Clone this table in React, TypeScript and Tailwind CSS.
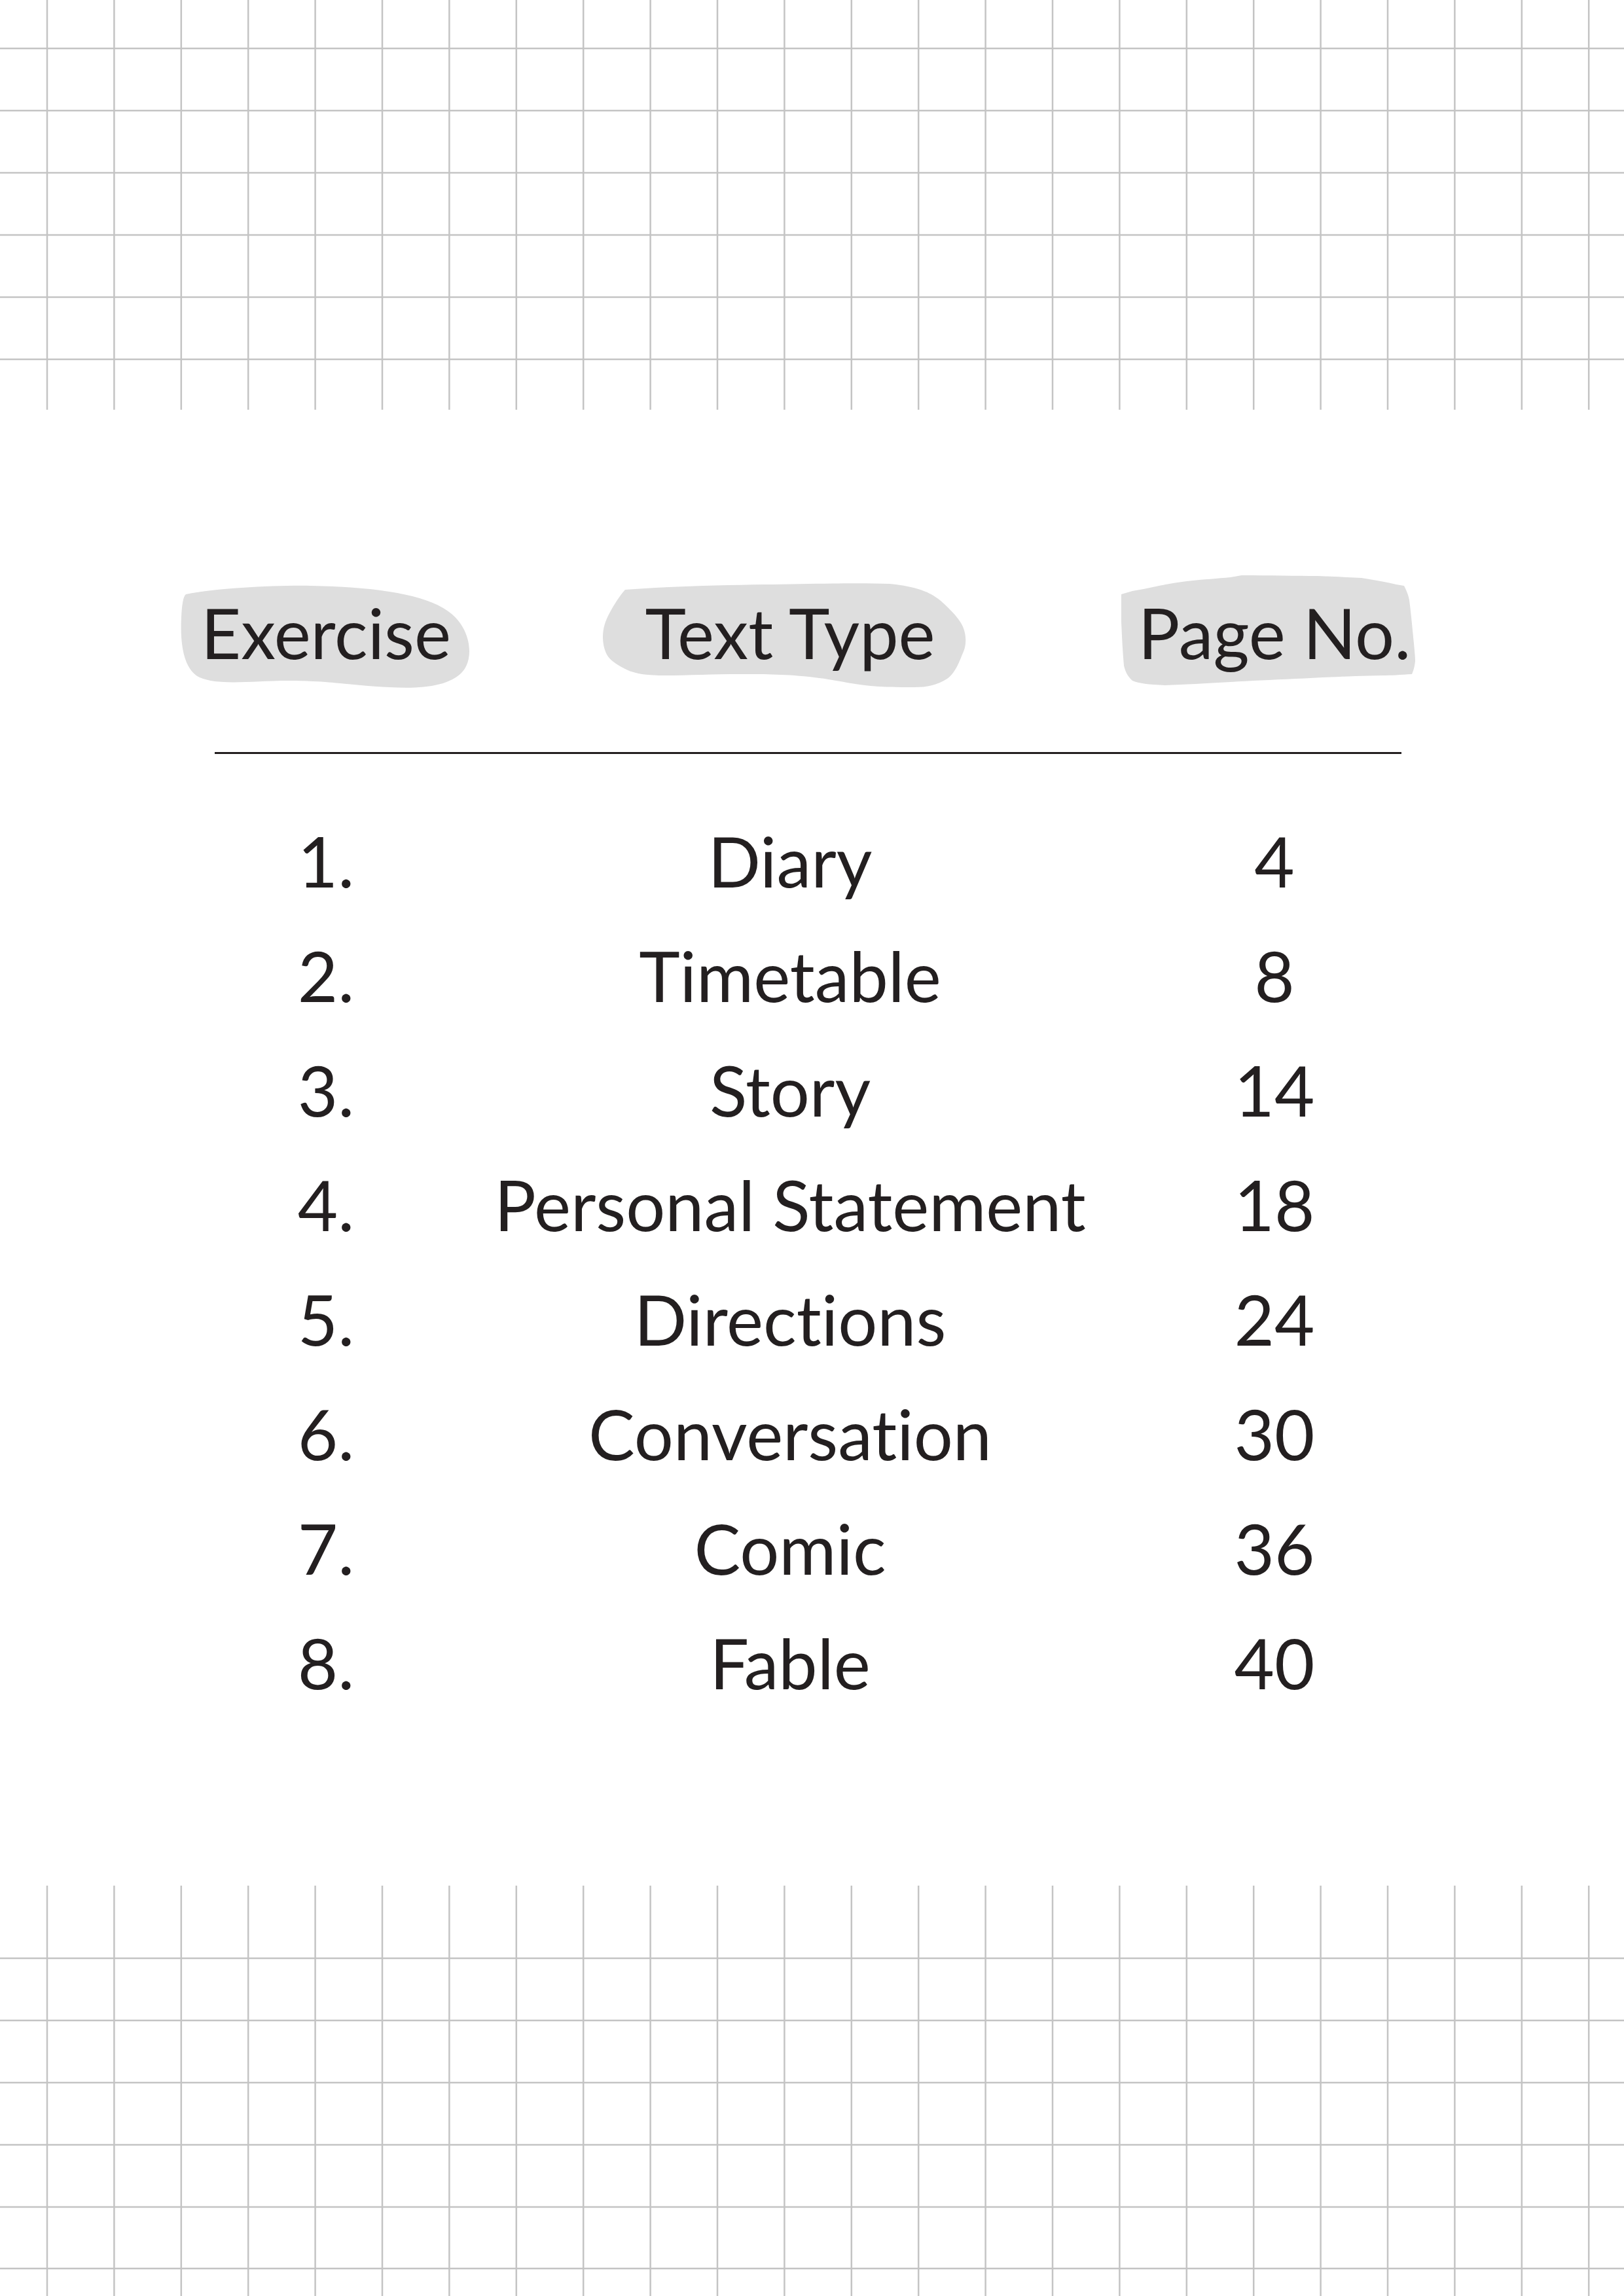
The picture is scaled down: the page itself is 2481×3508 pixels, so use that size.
import { FC } from "react"

type GridProps = {
  height: number
  rows: number[]
}

const GRID_X = Array.from({ length: 24 }, (_, i) => 72 + i * 102.4)

// squared paper strip, drawn as svg lines
const GridPaper: FC<GridProps> = ({ height, rows }) => (
  <svg width={2481} height={height} className="block" viewBox={`0 0 2481 ${height}`}>
    {rows.map(y => (
      <line key={`h${y}`} x1={0} x2={2481} y1={y} y2={y} stroke="#c4c4c4" strokeWidth={2.5} />
    ))}
    {GRID_X.map(x => (
      <line key={`v${x}`} x1={x} x2={x} y1={0} y2={height} stroke="#c4c4c4" strokeWidth={2.5} />
    ))}
  </svg>
)

const rowsData = [
  { no: "1.", type: "Diary", page: "4" },
  { no: "2.", type: "Timetable", page: "8" },
  { no: "3.", type: "Story", page: "14" },
  { no: "4.", type: "Personal Statement", page: "18" },
  { no: "5.", type: "Directions", page: "24" },
  { no: "6.", type: "Conversation", page: "30" },
  { no: "7.", type: "Comic", page: "36" },
  { no: "8.", type: "Fable", page: "40" },
]

const font =
  "font-['Lato','Open_Sans',sans-serif] font-normal text-[106px] text-[#231f20] whitespace-nowrap [font-variant-ligatures:none]"

export default function App() {
  return (
    <div className="w-[2481px] h-[3508px] bg-white overflow-hidden flex flex-col">
      <GridPaper height={626} rows={[74, 169, 264, 359, 454, 549]} />

      {/* header */}
      <div className={`${font} mt-[287px] ml-[248px] grid grid-cols-[500px_918px_562px] leading-[106px] text-center`}>
        <div className="relative">
          <svg className="absolute left-[27px] top-[-20px]" width={445} height={162} viewBox="0 0 445 162">
            <path
              d="M9,15 C60,5 150,1 200,2 C300,4 380,15 415,45 C445,70 450,115 430,135 C410,155 370,160 320,157 C270,155 230,147 166,147 C110,147 60,155 30,142 C5,130 0,90 2,50 C3,30 5,18 9,15 Z"
              fill="#dedede"
            />
          </svg>
          <span className="relative">Exercise</span>
        </div>
        <div className="relative">
          <svg className="absolute left-[173px] top-[-23px]" width={556} height={164} viewBox="0 0 556 164">
            <path
              d="M34,11 C100,6 180,4 247,3 C320,2 390,0 438,2 C480,6 500,15 515,27 C535,45 550,60 553,77 C556,92 553,102 549,110 C542,128 536,140 526,147 C510,157 495,160 476,160 C450,160 425,160 400,157 C370,153 350,148 323,145 C280,140 250,140 209,140 C170,140 130,142 94,142 C70,142 50,140 36,133 C20,125 10,118 6,110 C1,100 0,90 0,83 C0,70 4,58 10,47 C18,32 26,20 34,11 Z"
              fill="#dedede"
            />
          </svg>
          <span className="relative">Text Type</span>
        </div>
        <div className="relative">
          <svg className="absolute left-[44px] top-[-38px]" width={455} height={175} viewBox="0 0 455 175">
            <path
              d="M3,33 L20,28 L37,25 C60,20 80,16 103,13 C130,10 150,9 170,7 L187,4 C230,4 270,5 303,5 C330,6 350,7 370,8 C390,11 410,15 423,18 L435,20 C440,30 442,36 443,42 C446,65 448,88 450,108 C451,120 452,128 452,135 C451,145 449,150 447,155 C430,156 415,157 403,157 C350,158 310,160 270,162 C230,164 200,165 170,167 C130,169 100,171 70,172 C45,171 30,169 20,165 C12,158 9,150 7,142 C5,120 4,98 3,75 C3,60 3,45 3,33 Z"
              fill="#dedede"
            />
          </svg>
          <span className="relative">Page No.</span>
        </div>
      </div>

      <div className="mt-[130px] ml-[328px] w-[1813px] h-[3px] bg-[#231f20]" />

      {/* contents rows */}
      <div className={`${font} mt-[76px] ml-[248px] flex flex-col`}>
        {rowsData.map(r => (
          <div key={r.no} className="grid grid-cols-[500px_918px_562px] h-[175px] leading-[175px] text-center">
            <div>{r.no}</div>
            <div>{r.type}</div>
            <div>{r.page}</div>
          </div>
        ))}
      </div>

      <div className="mt-auto">
        <GridPaper height={627} rows={[111, 206, 301, 396, 491, 585]} />
      </div>
    </div>
  )
}
